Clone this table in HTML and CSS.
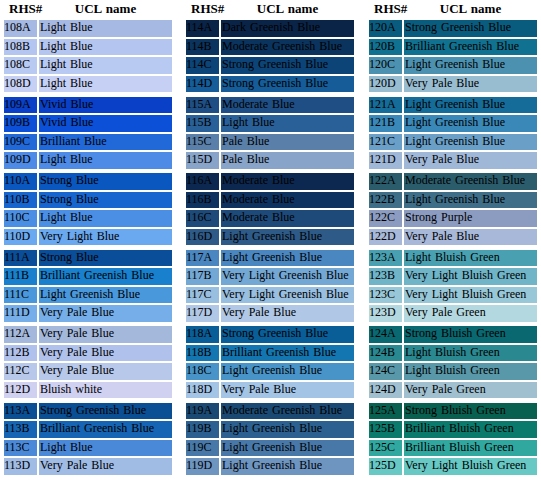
FILE: index.html
```html
<!DOCTYPE html>
<html>
<head>
<meta charset="utf-8">
<link rel="stylesheet" href="styles.css">
</head>
<body>
<div class="sheet">
 <section class="tbl">
  <div class="hdr"><span class="h-code">RHS#</span><span class="h-name">UCL name</span></div>
  <div class="grp">
   <div class="row" style="--c:#a6b9e3"><span class="code">108A</span><span class="name">Light Blue</span></div>
   <div class="row" style="--c:#b4c6f0"><span class="code">108B</span><span class="name">Light Blue</span></div>
   <div class="row" style="--c:#b8c9f2"><span class="code">108C</span><span class="name">Light Blue</span></div>
   <div class="row" style="--c:#c6d0f4"><span class="code">108D</span><span class="name">Light Blue</span></div>
  </div>
  <div class="grp">
   <div class="row" style="--c:#0a40c8"><span class="code">109A</span><span class="name">Vivid Blue</span></div>
   <div class="row" style="--c:#0b50d6"><span class="code">109B</span><span class="name">Vivid Blue</span></div>
   <div class="row" style="--c:#2168d8"><span class="code">109C</span><span class="name">Brilliant Blue</span></div>
   <div class="row" style="--c:#4d8be6"><span class="code">109D</span><span class="name">Light Blue</span></div>
  </div>
  <div class="grp">
   <div class="row" style="--c:#0b57c0"><span class="code">110A</span><span class="name">Strong Blue</span></div>
   <div class="row" style="--c:#1766d0"><span class="code">110B</span><span class="name">Strong Blue</span></div>
   <div class="row" style="--c:#4b8fe4"><span class="code">110C</span><span class="name">Light Blue</span></div>
   <div class="row" style="--c:#6aa8f0"><span class="code">110D</span><span class="name">Very Light Blue</span></div>
  </div>
  <div class="grp">
   <div class="row" style="--c:#0a4d98"><span class="code">111A</span><span class="name">Strong Blue</span></div>
   <div class="row" style="--c:#1880cc"><span class="code">111B</span><span class="name">Brilliant Greenish Blue</span></div>
   <div class="row" style="--c:#4a98dc"><span class="code">111C</span><span class="name">Light Greenish Blue</span></div>
   <div class="row" style="--c:#75aee8"><span class="code">111D</span><span class="name">Very Pale Blue</span></div>
  </div>
  <div class="grp">
   <div class="row" style="--c:#a4b8dc"><span class="code">112A</span><span class="name">Very Pale Blue</span></div>
   <div class="row" style="--c:#b0c2ec"><span class="code">112B</span><span class="name">Very Pale Blue</span></div>
   <div class="row" style="--c:#b8c8ea"><span class="code">112C</span><span class="name">Very Pale Blue</span></div>
   <div class="row" style="--c:#d0d0f0"><span class="code">112D</span><span class="name">Bluish white</span></div>
  </div>
  <div class="grp">
   <div class="row" style="--c:#0a4e94"><span class="code">113A</span><span class="name">Strong Greenish Blue</span></div>
   <div class="row" style="--c:#1565b4"><span class="code">113B</span><span class="name">Brilliant Greenish Blue</span></div>
   <div class="row" style="--c:#4a88d8"><span class="code">113C</span><span class="name">Light Blue</span></div>
   <div class="row" style="--c:#a0bce4"><span class="code">113D</span><span class="name">Very Pale Blue</span></div>
  </div>
 </section>

 <section class="tbl">
  <div class="hdr"><span class="h-code">RHS#</span><span class="h-name">UCL name</span></div>
  <div class="grp">
   <div class="row" style="--c:#0a2448"><span class="code">114A</span><span class="name">Dark Greenish Blue</span></div>
   <div class="row" style="--c:#0a345e"><span class="code">114B</span><span class="name">Moderate Greenish Blue</span></div>
   <div class="row" style="--c:#0c4478"><span class="code">114C</span><span class="name">Strong Greenish Blue</span></div>
   <div class="row" style="--c:#155c98"><span class="code">114D</span><span class="name">Strong Greenish Blue</span></div>
  </div>
  <div class="grp">
   <div class="row" style="--c:#1e4e84"><span class="code">115A</span><span class="name">Moderate Blue</span></div>
   <div class="row" style="--c:#2a6098"><span class="code">115B</span><span class="name">Light Blue</span></div>
   <div class="row" style="--c:#5a7fa8"><span class="code">115C</span><span class="name">Pale Blue</span></div>
   <div class="row" style="--c:#88a4c8"><span class="code">115D</span><span class="name">Pale Blue</span></div>
  </div>
  <div class="grp">
   <div class="row" style="--c:#0c2850"><span class="code">116A</span><span class="name">Moderate Blue</span></div>
   <div class="row" style="--c:#0e3260"><span class="code">116B</span><span class="name">Moderate Blue</span></div>
   <div class="row" style="--c:#1e4a7a"><span class="code">116C</span><span class="name">Moderate Blue</span></div>
   <div class="row" style="--c:#2e5a88"><span class="code">116D</span><span class="name">Light Greenish Blue</span></div>
  </div>
  <div class="grp">
   <div class="row" style="--c:#4a86c0"><span class="code">117A</span><span class="name">Light Greenish Blue</span></div>
   <div class="row" style="--c:#74a8d4"><span class="code">117B</span><span class="name">Very Light Greenish Blue</span></div>
   <div class="row" style="--c:#98bee0"><span class="code">117C</span><span class="name">Very Light Greenish Blue</span></div>
   <div class="row" style="--c:#b0c8e6"><span class="code">117D</span><span class="name">Very Pale Blue</span></div>
  </div>
  <div class="grp">
   <div class="row" style="--c:#0a5e98"><span class="code">118A</span><span class="name">Strong Greenish Blue</span></div>
   <div class="row" style="--c:#1476b0"><span class="code">118B</span><span class="name">Brilliant Greenish Blue</span></div>
   <div class="row" style="--c:#4894c8"><span class="code">118C</span><span class="name">Light Greenish Blue</span></div>
   <div class="row" style="--c:#a4c4e6"><span class="code">118D</span><span class="name">Very Pale Blue</span></div>
  </div>
  <div class="grp">
   <div class="row" style="--c:#1a4a74"><span class="code">119A</span><span class="name">Moderate Greenish Blue</span></div>
   <div class="row" style="--c:#2c6090"><span class="code">119B</span><span class="name">Light Greenish Blue</span></div>
   <div class="row" style="--c:#4878a8"><span class="code">119C</span><span class="name">Light Greenish Blue</span></div>
   <div class="row" style="--c:#6e94c0"><span class="code">119D</span><span class="name">Light Greenish Blue</span></div>
  </div>
 </section>

 <section class="tbl t3">
  <div class="hdr"><span class="h-code">RHS#</span><span class="h-name">UCL name</span></div>
  <div class="grp">
   <div class="row" style="--c:#0a5c7e"><span class="code">120A</span><span class="name">Strong Greenish Blue</span></div>
   <div class="row" style="--c:#107290"><span class="code">120B</span><span class="name">Brilliant Greenish Blue</span></div>
   <div class="row" style="--c:#4c92b0"><span class="code">120C</span><span class="name">Light Greenish Blue</span></div>
   <div class="row" style="--c:#98bcd0"><span class="code">120D</span><span class="name">Very Pale Blue</span></div>
  </div>
  <div class="grp">
   <div class="row" style="--c:#166c98"><span class="code">121A</span><span class="name">Light Greenish Blue</span></div>
   <div class="row" style="--c:#3a88b8"><span class="code">121B</span><span class="name">Light Greenish Blue</span></div>
   <div class="row" style="--c:#6aa0c8"><span class="code">121C</span><span class="name">Light Greenish Blue</span></div>
   <div class="row" style="--c:#a0b8d8"><span class="code">121D</span><span class="name">Very Pale Blue</span></div>
  </div>
  <div class="grp">
   <div class="row" style="--c:#2a5c6c"><span class="code">122A</span><span class="name">Moderate Greenish Blue</span></div>
   <div class="row" style="--c:#3e6e88"><span class="code">122B</span><span class="name">Light Greenish Blue</span></div>
   <div class="row" style="--c:#8c9cc0"><span class="code">122C</span><span class="name">Strong Purple</span></div>
   <div class="row" style="--c:#a8b8d8"><span class="code">122D</span><span class="name">Very Pale Blue</span></div>
  </div>
  <div class="grp">
   <div class="row" style="--c:#48a0b0"><span class="code">123A</span><span class="name">Light Bluish Green</span></div>
   <div class="row" style="--c:#70b4c8"><span class="code">123B</span><span class="name">Very Light Bluish Green</span></div>
   <div class="row" style="--c:#98c8d8"><span class="code">123C</span><span class="name">Very Light Bluish Green</span></div>
   <div class="row" style="--c:#b4d8e0"><span class="code">123D</span><span class="name">Very Pale Green</span></div>
  </div>
  <div class="grp">
   <div class="row" style="--c:#0a6870"><span class="code">124A</span><span class="name">Strong Bluish Green</span></div>
   <div class="row" style="--c:#2a8890"><span class="code">124B</span><span class="name">Light Bluish Green</span></div>
   <div class="row" style="--c:#5898a8"><span class="code">124C</span><span class="name">Light Bluish Green</span></div>
   <div class="row" style="--c:#a0c0d0"><span class="code">124D</span><span class="name">Very Pale Green</span></div>
  </div>
  <div class="grp">
   <div class="row" style="--c:#086050"><span class="code">125A</span><span class="name">Strong Bluish Green</span></div>
   <div class="row" style="--c:#0a7a6c"><span class="code">125B</span><span class="name">Brilliant Bluish Green</span></div>
   <div class="row" style="--c:#30a8a0"><span class="code">125C</span><span class="name">Brilliant Bluish Green</span></div>
   <div class="row" style="--c:#68c8c4"><span class="code">125D</span><span class="name">Very Light Bluish Green</span></div>
  </div>
 </section>
</div>
</body>
</html>
```

FILE: styles.css
```css
html, body {
  margin: 0;
  background: #fff;
}
body {
  font-family: "Liberation Serif", "Times New Roman", serif;
  font-size: 12px;
  color: #000;
}
.sheet {
  display: flex;
  padding-left: 4px;
  gap: 14px;
}
.tbl {
  width: 168px;
  display: flex;
  flex-direction: column;
}
.t3 {
  margin-left: 1px;
}
.hdr {
  display: grid;
  grid-template-columns: 35px 133px;
  height: 20px;
  font-weight: bold;
  font-size: 13px;
  line-height: 18px;
}
.h-code {
  padding-left: 5px;
  white-space: nowrap;
}
.h-name {
  text-align: center;
  white-space: nowrap;
  word-spacing: 1px;
}
.grp {
  display: flex;
  flex-direction: column;
  gap: 2px;
  margin-bottom: 4.5px;
}
.row {
  display: grid;
  grid-template-columns: 33px 133px;
  column-gap: 2px;
  height: 16.5px;
  line-height: 15px;
}
.code, .name {
  background: var(--c);
  white-space: nowrap;
  overflow: hidden;
}
.name {
  padding-left: 1px;
  word-spacing: 1px;
}
```
